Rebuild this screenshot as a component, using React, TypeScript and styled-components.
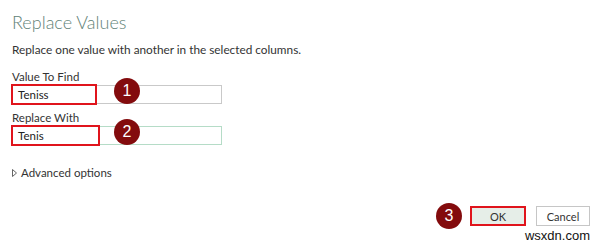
import React from "react";
import styled, { createGlobalStyle } from "styled-components";

const Global = createGlobalStyle`
  html, body { margin: 0; padding: 0; background: #ffffff; }
  body { font-family: Lato, "Open Sans", "Liberation Sans", sans-serif; }
`;

const Dialog = styled.div`
  position: relative;
  width: 602px;
  height: 245px;
  box-sizing: border-box;
  padding: 10px 12px 0 12px;
  display: flex;
  flex-direction: column;
  overflow: hidden;
`;

const Title = styled.h1`
  margin: 0;
  font-size: 18px;
  line-height: 24px;
  font-weight: 300;
  color: #5f8277;
`;

const Subtitle = styled.p`
  margin: 8px 0 0 0;
  font-size: 11.8px;
  line-height: 16px;
  color: #333333;
`;

const Label = styled.div<{ $top: number }>`
  margin-top: ${(p) => p.$top}px;
  font-size: 11.5px;
  line-height: 14px;
  color: #333333;
`;

const Field = styled.div`
  position: relative;
  width: 210px;
  height: 19px;
  margin-top: 1px;
`;

const Input = styled.div<{ $border: string }>`
  box-sizing: border-box;
  width: 100%;
  height: 100%;
  border: 1px solid ${(p) => p.$border};
  background: #ffffff;
  padding: 0 5px;
  font-size: 11.5px;
  line-height: 17px;
  color: #222222;
`;

const Highlight = styled.div<{ $w: number }>`
  position: absolute;
  left: -1px;
  top: -1px;
  width: ${(p) => p.$w}px;
  height: 21px;
  box-sizing: border-box;
  border: 2px solid #e0141c;
`;

const Badge = styled.div`
  flex: none;
  width: 26px;
  height: 26px;
  border-radius: 50%;
  background: #830b0d;
  color: #ffffff;
  font-family: "Liberation Sans", Arial, sans-serif;
  font-size: 16px;
  line-height: 26px;
  text-align: center;
`;

const FieldBadge = styled(Badge)`
  position: absolute;
  left: 102px;
  top: -7px;
`;

const Advanced = styled.div`
  margin-top: 20px;
  display: flex;
  align-items: center;
  gap: 4px;
  font-size: 11.5px;
  line-height: 16px;
  color: #333333;
`;

const Caret = styled.svg`
  width: 5px;
  height: 8px;
`;

const Footer = styled.div`
  margin-top: auto;
  margin-bottom: 16px;
  display: flex;
  align-items: center;
  justify-content: flex-end;
  gap: 10px;
`;

const Button = styled.button<{ $primary?: boolean }>`
  box-sizing: border-box;
  width: ${(p) => (p.$primary ? 56 : 54)}px;
  height: 20px;
  padding: 0;
  font-family: Lato, "Open Sans", "Liberation Sans", sans-serif;
  font-size: 11px;
  color: #333333;
  background: ${(p) => (p.$primary ? "#e6eee8" : "#ffffff")};
  border: ${(p) => (p.$primary ? "2px solid #e0141c" : "1px solid #c6c6c6")};
`;

const Pair = styled.div`
  display: flex;
  align-items: center;
  gap: 8px;
`;

const Watermark = styled.div`
  position: absolute;
  right: 12px;
  bottom: 2px;
  font-family: "Liberation Sans", Arial, sans-serif;
  font-size: 13px;
  line-height: 14px;
  color: #111111;
`;

export default function App() {
  return (
    <>
      <Global />
      <Dialog>
        <Title>Replace Values</Title>
        <Subtitle>Replace one value with another in the selected columns.</Subtitle>

        <Label $top={12}>Value To Find</Label>
        <Field>
          <Input $border="#c9c9c9">Teniss</Input>
          <Highlight $w={86} />
          <FieldBadge>1</FieldBadge>
        </Field>

        <Label $top={7}>Replace With</Label>
        <Field>
          <Input $border="#b5dcc7">Tenis</Input>
          <Highlight $w={89} />
          <FieldBadge>2</FieldBadge>
        </Field>

        <Advanced>
          <Caret viewBox="0 0 5 8">
            <path d="M0.5 0.5 L4.5 4 L0.5 7.5 Z" fill="none" stroke="#555" strokeWidth="0.9" />
          </Caret>
          Advanced options
        </Advanced>

        <Footer>
          <Pair>
            <Badge>3</Badge>
            <Button $primary>OK</Button>
          </Pair>
          <Button>Cancel</Button>
        </Footer>
        <Watermark>wsxdn.com</Watermark>
      </Dialog>
    </>
  );
}
